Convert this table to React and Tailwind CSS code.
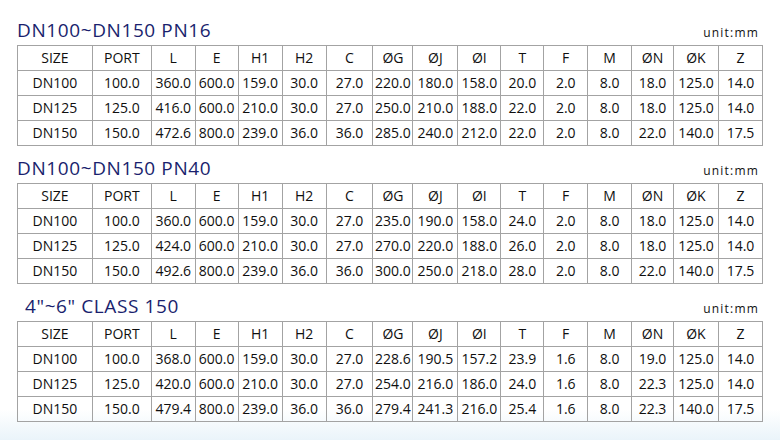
const cols = [
  'w-[75px]', 'w-[59px]', 'w-[44px]', 'w-[43px]', 'w-[44px]', 'w-[44px]', 'w-[47px]', 'w-[40px]',
  'w-[45px]', 'w-[43px]', 'w-[43px]', 'w-[44px]', 'w-[44px]', 'w-[42px]', 'w-[45px]', 'w-[44px]',
]

const head = ['SIZE', 'PORT', 'L', 'E', 'H1', 'H2', 'C', 'ØG', 'ØJ', 'ØI', 'T', 'F', 'M', 'ØN', 'ØK', 'Z']

const tables = [
  {
    title: 'DN100~DN150 PN16',
    indent: false,
    rows: [
      ['DN100', '100.0', '360.0', '600.0', '159.0', '30.0', '27.0', '220.0', '180.0', '158.0', '20.0', '2.0', '8.0', '18.0', '125.0', '14.0'],
      ['DN125', '125.0', '416.0', '600.0', '210.0', '30.0', '27.0', '250.0', '210.0', '188.0', '22.0', '2.0', '8.0', '18.0', '125.0', '14.0'],
      ['DN150', '150.0', '472.6', '800.0', '239.0', '36.0', '36.0', '285.0', '240.0', '212.0', '22.0', '2.0', '8.0', '22.0', '140.0', '17.5'],
    ],
  },
  {
    title: 'DN100~DN150 PN40',
    indent: false,
    rows: [
      ['DN100', '100.0', '360.0', '600.0', '159.0', '30.0', '27.0', '235.0', '190.0', '158.0', '24.0', '2.0', '8.0', '18.0', '125.0', '14.0'],
      ['DN125', '125.0', '424.0', '600.0', '210.0', '30.0', '27.0', '270.0', '220.0', '188.0', '26.0', '2.0', '8.0', '18.0', '125.0', '14.0'],
      ['DN150', '150.0', '492.6', '800.0', '239.0', '36.0', '36.0', '300.0', '250.0', '218.0', '28.0', '2.0', '8.0', '22.0', '140.0', '17.5'],
    ],
  },
  {
    title: '4"~6" CLASS 150',
    indent: true,
    rows: [
      ['DN100', '100.0', '368.0', '600.0', '159.0', '30.0', '27.0', '228.6', '190.5', '157.2', '23.9', '1.6', '8.0', '19.0', '125.0', '14.0'],
      ['DN125', '125.0', '420.0', '600.0', '210.0', '30.0', '27.0', '254.0', '216.0', '186.0', '24.0', '1.6', '8.0', '22.3', '125.0', '14.0'],
      ['DN150', '150.0', '479.4', '800.0', '239.0', '36.0', '36.0', '279.4', '241.3', '216.0', '25.4', '1.6', '8.0', '22.3', '140.0', '17.5'],
    ],
  },
]

function SpecTable({ title, indent, rows }) {
  return (
    <section>
      <div className="h-[37px] flex items-end justify-between">
        <h2 className={`pb-[3px] text-[19px] leading-[24px] tracking-[0.6px] text-[#1a1f6e] ${indent ? 'ml-[8px]' : ''}`}>
          {title}
        </h2>
        <span className="pb-[4px] pr-[4px] text-[12px] leading-[16px] tracking-[1.2px] text-[#111]">unit:mm</span>
      </div>
      <table className="table-fixed border-collapse border border-[#8c8c8c] text-[14px] text-[#0f0f0f] text-center">
        <colgroup>
          {cols.map((c, i) => (
            <col key={i} className={c} />
          ))}
        </colgroup>
        <thead>
          <tr>
            {head.map((h) => (
              <td key={h} className="h-[25px] p-0 border border-[#a3a3a3] leading-none">
                {h}
              </td>
            ))}
          </tr>
        </thead>
        <tbody>
          {rows.map((r) => (
            <tr key={r[0]}>
              {r.map((v, i) => (
                <td key={i} className="h-[25px] p-0 border border-[#a3a3a3] leading-none whitespace-nowrap">
                  {v}
                </td>
              ))}
            </tr>
          ))}
        </tbody>
      </table>
    </section>
  )
}

export default function App() {
  return (
    <div className="w-[780px] h-[440px] overflow-hidden bg-[linear-gradient(to_bottom,#ffffff_93%,#eaf4fa)] font-['Open_Sans',sans-serif]">
      <div className="ml-[17px] w-[746px] pt-[8px]">
        {tables.map((t) => (
          <SpecTable key={t.title} {...t} />
        ))}
      </div>
    </div>
  )
}
